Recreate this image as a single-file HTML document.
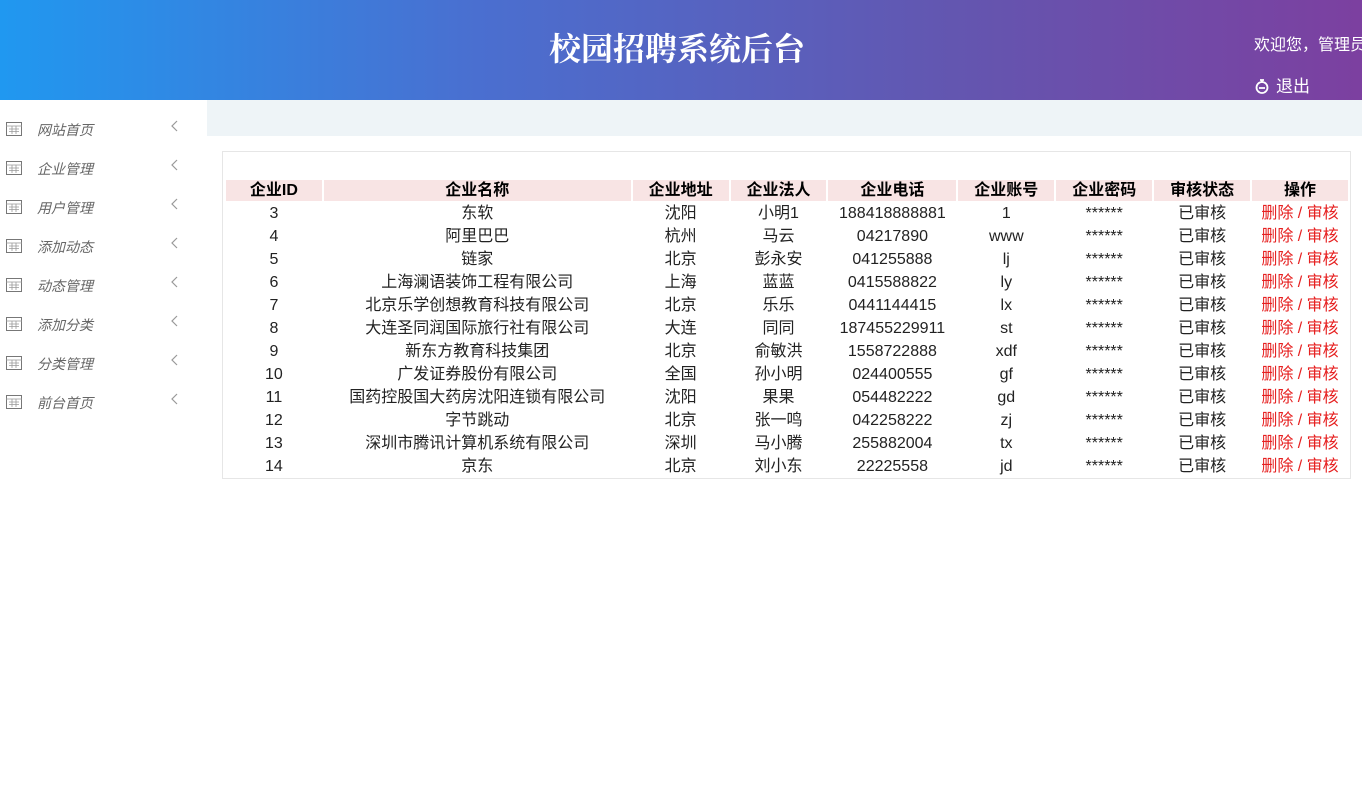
<!DOCTYPE html>
<html><head><meta charset="utf-8"><style>
*{margin:0;padding:0;box-sizing:border-box}
body{width:1362px;height:812px;background:#fff;font-family:"Liberation Sans","Noto Sans CJK SC",sans-serif;position:relative;overflow:hidden}
.hd{position:absolute;left:0;top:0;width:1362px;height:100px;background:linear-gradient(90deg,#2098F0 0%,#4a6fd0 35%,#6356b0 70%,#7C40A0 100%)}
.hd h1{position:absolute;left:0;width:1354px;text-align:center;top:24px;font-size:32px;color:#fff;font-weight:bold;font-family:"Noto Serif CJK SC",serif;letter-spacing:0px}
.wel{position:absolute;left:1254px;top:31px;color:#fff;font-size:16px;white-space:nowrap}
.out{position:absolute;left:1254px;top:72px;color:#fff;font-size:17px;white-space:nowrap}
.band{position:absolute;left:207px;top:100px;width:1155px;height:36px;background:#EEF4F7}
.side div{position:absolute;left:0;height:20px;width:200px;font-size:14px;font-style:italic;color:#666}
.side svg.i{position:absolute;left:6px;top:2px}
.side span{position:absolute;left:37px;top:0}
.side svg.c{position:absolute;left:170px;top:-1px}
.box{position:absolute;left:222px;top:151px;width:1129px;height:328px;border:1px solid #e6e6e6}
table{position:absolute;left:1px;top:26px;border-spacing:2px;font-size:16px;color:#222}
td,th{text-align:center;height:21px;padding:0;line-height:21px;white-space:nowrap}
td{height:21px;line-height:20px}
th{background:#F8E4E4;font-weight:bold;color:#000}
.r{color:#e62020}
</style></head><body>
<div class="hd"><h1>校园招聘系统后台</h1>
<div class="wel">欢迎您，管理员</div>
<div class="out"><svg width="16" height="16" viewBox="0 0 16 16" style="vertical-align:-2px;margin-right:6px"><circle cx="8" cy="9.5" r="5.5" fill="none" stroke="#fff" stroke-width="1.8"/><path d="M6 2h4M8 2v2.5M5 10h6" stroke="#fff" stroke-width="1.8" fill="none"/></svg>退出</div></div>
<div class="band"></div>
<div class="side">
<div style="top:120px"><svg class="i" width="16" height="14"><rect x="0.5" y="0.5" width="15" height="13" fill="none" stroke="#777"/><path d="M0 4h16M3 7h10M3 9.5h10M6 4v8M10 4v8" stroke="#999" stroke-width="0.8"/></svg><span>网站首页</span><svg class="c" width="10" height="14"><path d="M7 2L2 7l5 5" fill="none" stroke="#999" stroke-width="1.2"/></svg></div>
<div style="top:159px"><svg class="i" width="16" height="14"><rect x="0.5" y="0.5" width="15" height="13" fill="none" stroke="#777"/><path d="M0 4h16M3 7h10M3 9.5h10M6 4v8M10 4v8" stroke="#999" stroke-width="0.8"/></svg><span>企业管理</span><svg class="c" width="10" height="14"><path d="M7 2L2 7l5 5" fill="none" stroke="#999" stroke-width="1.2"/></svg></div>
<div style="top:198px"><svg class="i" width="16" height="14"><rect x="0.5" y="0.5" width="15" height="13" fill="none" stroke="#777"/><path d="M0 4h16M3 7h10M3 9.5h10M6 4v8M10 4v8" stroke="#999" stroke-width="0.8"/></svg><span>用户管理</span><svg class="c" width="10" height="14"><path d="M7 2L2 7l5 5" fill="none" stroke="#999" stroke-width="1.2"/></svg></div>
<div style="top:237px"><svg class="i" width="16" height="14"><rect x="0.5" y="0.5" width="15" height="13" fill="none" stroke="#777"/><path d="M0 4h16M3 7h10M3 9.5h10M6 4v8M10 4v8" stroke="#999" stroke-width="0.8"/></svg><span>添加动态</span><svg class="c" width="10" height="14"><path d="M7 2L2 7l5 5" fill="none" stroke="#999" stroke-width="1.2"/></svg></div>
<div style="top:276px"><svg class="i" width="16" height="14"><rect x="0.5" y="0.5" width="15" height="13" fill="none" stroke="#777"/><path d="M0 4h16M3 7h10M3 9.5h10M6 4v8M10 4v8" stroke="#999" stroke-width="0.8"/></svg><span>动态管理</span><svg class="c" width="10" height="14"><path d="M7 2L2 7l5 5" fill="none" stroke="#999" stroke-width="1.2"/></svg></div>
<div style="top:315px"><svg class="i" width="16" height="14"><rect x="0.5" y="0.5" width="15" height="13" fill="none" stroke="#777"/><path d="M0 4h16M3 7h10M3 9.5h10M6 4v8M10 4v8" stroke="#999" stroke-width="0.8"/></svg><span>添加分类</span><svg class="c" width="10" height="14"><path d="M7 2L2 7l5 5" fill="none" stroke="#999" stroke-width="1.2"/></svg></div>
<div style="top:354px"><svg class="i" width="16" height="14"><rect x="0.5" y="0.5" width="15" height="13" fill="none" stroke="#777"/><path d="M0 4h16M3 7h10M3 9.5h10M6 4v8M10 4v8" stroke="#999" stroke-width="0.8"/></svg><span>分类管理</span><svg class="c" width="10" height="14"><path d="M7 2L2 7l5 5" fill="none" stroke="#999" stroke-width="1.2"/></svg></div>
<div style="top:393px"><svg class="i" width="16" height="14"><rect x="0.5" y="0.5" width="15" height="13" fill="none" stroke="#777"/><path d="M0 4h16M3 7h10M3 9.5h10M6 4v8M10 4v8" stroke="#999" stroke-width="0.8"/></svg><span>前台首页</span><svg class="c" width="10" height="14"><path d="M7 2L2 7l5 5" fill="none" stroke="#999" stroke-width="1.2"/></svg></div>
</div>
<div class="box"><table>
<tr><th style="width:96px">企业ID</th><th style="width:307px">企业名称</th><th style="width:96px">企业地址</th><th style="width:96px">企业法人</th><th style="width:128px">企业电话</th><th style="width:96px">企业账号</th><th style="width:96px">企业密码</th><th style="width:96px">审核状态</th><th style="width:96px">操作</th></tr>
<tr><td>3</td><td>东软</td><td>沈阳</td><td>小明1</td><td>188418888881</td><td>1</td><td>******</td><td>已审核</td><td class="r">删除 / 审核</td></tr>
<tr><td>4</td><td>阿里巴巴</td><td>杭州</td><td>马云</td><td>04217890</td><td>www</td><td>******</td><td>已审核</td><td class="r">删除 / 审核</td></tr>
<tr><td>5</td><td>链家</td><td>北京</td><td>彭永安</td><td>041255888</td><td>lj</td><td>******</td><td>已审核</td><td class="r">删除 / 审核</td></tr>
<tr><td>6</td><td>上海澜语装饰工程有限公司</td><td>上海</td><td>蓝蓝</td><td>0415588822</td><td>ly</td><td>******</td><td>已审核</td><td class="r">删除 / 审核</td></tr>
<tr><td>7</td><td>北京乐学创想教育科技有限公司</td><td>北京</td><td>乐乐</td><td>0441144415</td><td>lx</td><td>******</td><td>已审核</td><td class="r">删除 / 审核</td></tr>
<tr><td>8</td><td>大连圣同润国际旅行社有限公司</td><td>大连</td><td>同同</td><td>187455229911</td><td>st</td><td>******</td><td>已审核</td><td class="r">删除 / 审核</td></tr>
<tr><td>9</td><td>新东方教育科技集团</td><td>北京</td><td>俞敏洪</td><td>1558722888</td><td>xdf</td><td>******</td><td>已审核</td><td class="r">删除 / 审核</td></tr>
<tr><td>10</td><td>广发证券股份有限公司</td><td>全国</td><td>孙小明</td><td>024400555</td><td>gf</td><td>******</td><td>已审核</td><td class="r">删除 / 审核</td></tr>
<tr><td>11</td><td>国药控股国大药房沈阳连锁有限公司</td><td>沈阳</td><td>果果</td><td>054482222</td><td>gd</td><td>******</td><td>已审核</td><td class="r">删除 / 审核</td></tr>
<tr><td>12</td><td>字节跳动</td><td>北京</td><td>张一鸣</td><td>042258222</td><td>zj</td><td>******</td><td>已审核</td><td class="r">删除 / 审核</td></tr>
<tr><td>13</td><td>深圳市腾讯计算机系统有限公司</td><td>深圳</td><td>马小腾</td><td>255882004</td><td>tx</td><td>******</td><td>已审核</td><td class="r">删除 / 审核</td></tr>
<tr><td>14</td><td>京东</td><td>北京</td><td>刘小东</td><td>22225558</td><td>jd</td><td>******</td><td>已审核</td><td class="r">删除 / 审核</td></tr>
</table></div>
</body></html>
